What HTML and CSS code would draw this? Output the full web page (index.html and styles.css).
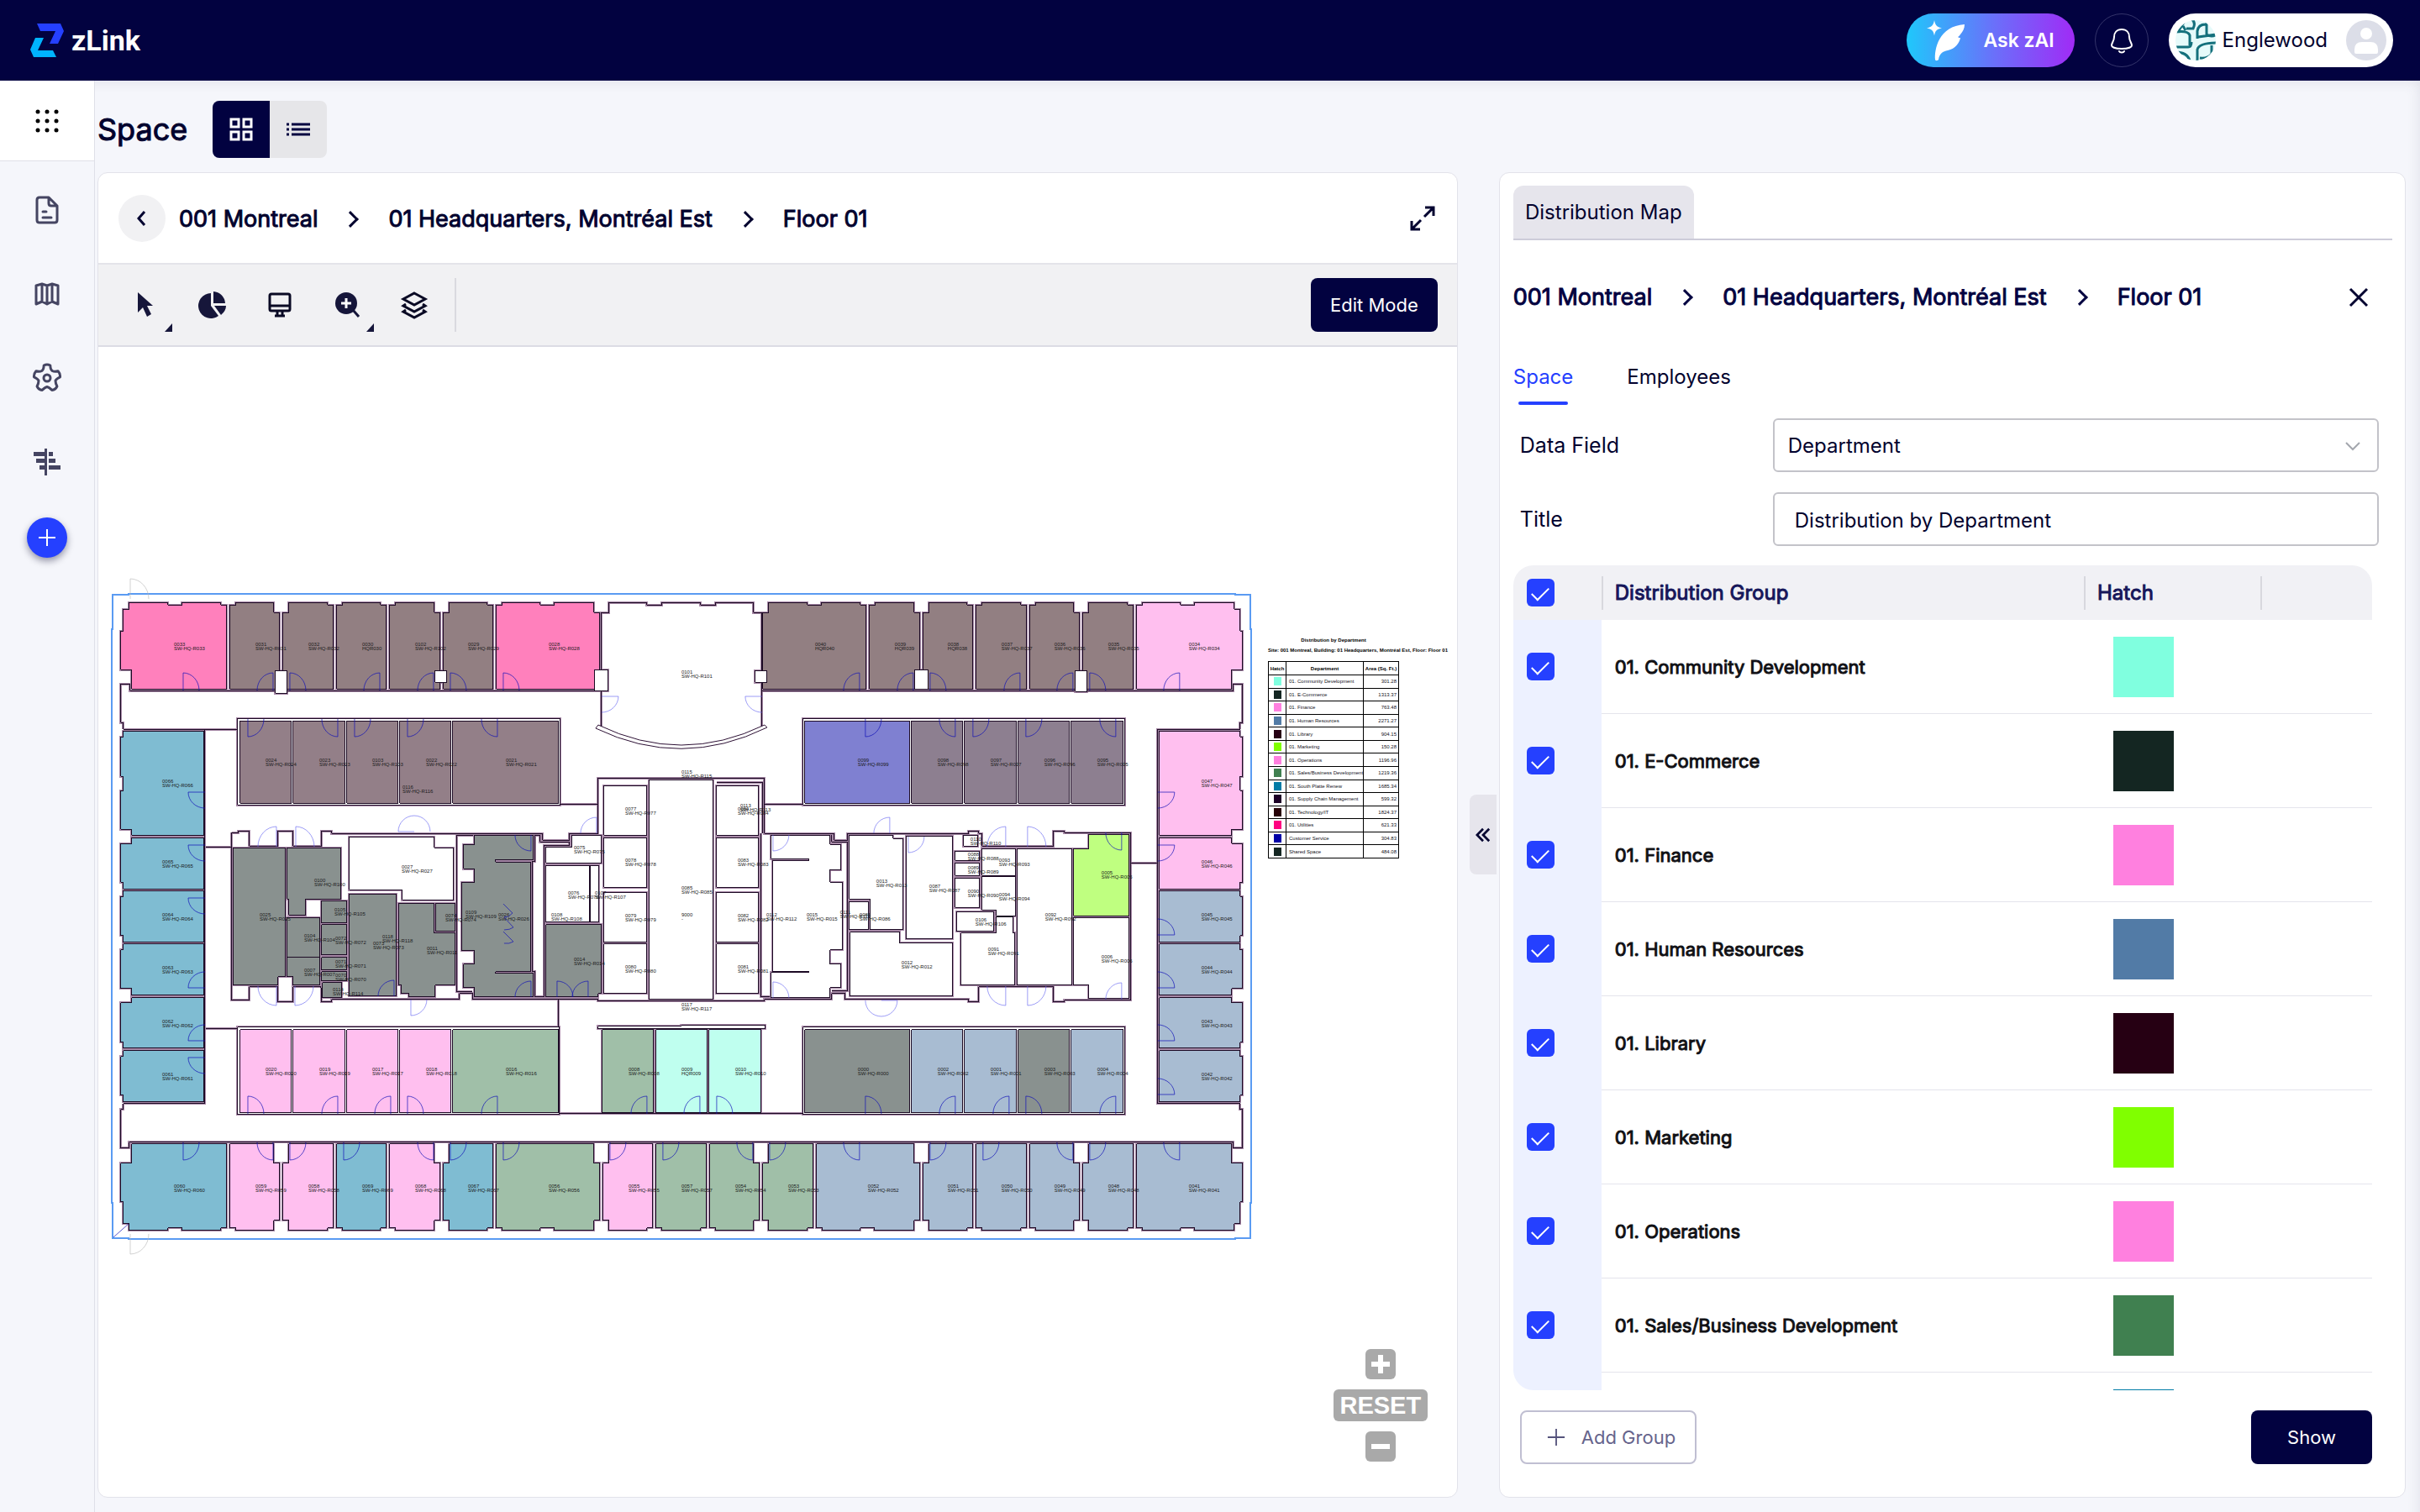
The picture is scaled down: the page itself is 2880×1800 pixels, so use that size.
FILE: index.html
```html
<!DOCTYPE html>
<html lang="en">
<head>
<meta charset="utf-8">
<title>zLink – Space</title>
<meta name="viewport" content="width=device-width, initial-scale=1">
<link rel="stylesheet" href="styles.css">
</head>
<body>
<header class="topbar">
  <a class="brand" href="#" aria-label="zLink home">
    <svg class="brand-mark" viewBox="0 0 42 42" aria-hidden="true">
      <path fill="#2540ff" d="M9 1h28l4 9-7 15H24l7-15H13z"/>
      <path fill="#00b4ff" d="M7 18h10l-7 15h18l4 8H5l-4-9z"/>
    </svg>
    <span>zLink</span>
  </a>
  <div class="topbar-tools">
    <button class="ask" type="button">
      <svg viewBox="0 0 46 50" aria-hidden="true" fill="#fff">
        <path d="M9 1c1 6 3 8 9 9.500c-6 1-8 3-9 9c-1-6-3-8-9-9c6-1.500 8-3.500 9-9.500z"/>
        <path d="M45 6c0 5-2 8-5 12c-1 1-1 2-3 3c1 1 2 1 3 1c-1 6-6 13-15 15c-6 1-10 4-11 11c-1 1-3 2-4 0c-1-12 4-40 35-42z"/>
      </svg>
      <span>Ask zAI</span>
    </button>
    <button class="bell" type="button" aria-label="Notifications">
      <svg viewBox="0 0 28 32" aria-hidden="true" fill="none" stroke="#fff" stroke-width="2" stroke-linecap="round">
        <path d="M14 3c-6 0-9 4-9 9c0 5-3 7-3 10c0 2 4 4 12 4s12-2 12-4c0-3-3-5-3-10c0-5-3-9-9-9zM11 29c1 2 5 2 6 0"/>
      </svg>
    </button>
    <button class="account" type="button">
      <svg class="org" viewBox="0 0 48 48" aria-hidden="true">
        <clipPath id="org-clip"><circle cx="24" cy="24" r="24"/></clipPath>
        <g clip-path="url(#org-clip)">
          <rect width="48" height="48" fill="#e6fafa"/>
          <g fill="none" stroke="#14707c" stroke-width="3">
            <path d="M0 14q15-2 17 4v12M0 32h15q4 0 4-6"/>
            <path d="M3 14L11 1M13 10h8q4-8-3-12M12 12l-3-5"/>
            <path d="M26 22V13q1-8 10-8M37 3v14q6 4 12 0M27 20l22-3"/>
            <path d="M26 48V35q2-8 24-8M43 30v10q-4 6-14 5M0 38q14 0 17 10"/>
          </g>
        </g>
      </svg>
      <span>Englewood</span>
      <svg class="avatar" viewBox="0 0 48 48" aria-hidden="true">
        <circle cx="24" cy="24" r="24" fill="#dcdee8"/>
        <circle cx="24" cy="16" r="7" fill="#fff"/>
        <path d="M10 38v-3q0-9 9-9h10q9 0 9 9v3q0 2-2 2H12q-2 0-2-2z" fill="#fff"/>
      </svg>
    </button>
  </div>
</header>

<div class="shell">
  <nav class="sidebar" aria-label="Main">
    <button class="apps" type="button" aria-label="Applications">
      <svg viewBox="0 0 28 28" aria-hidden="true">
        <circle cx="3" cy="3" r="2.500"/><circle cx="14" cy="3" r="2.500"/><circle cx="25" cy="3" r="2.500"/>
        <circle cx="3" cy="14" r="2.500"/><circle cx="14" cy="14" r="2.500"/><circle cx="25" cy="14" r="2.500"/>
        <circle cx="3" cy="25" r="2.500"/><circle cx="14" cy="25" r="2.500"/><circle cx="25" cy="25" r="2.500"/>
      </svg>
    </button>
    <a class="nav-link" href="#" aria-label="Documents">
      <svg viewBox="0 0 36 36" aria-hidden="true">
        <path d="M20 3H9q-3 0-3 3v24q0 3 3 3h18q3 0 3-3V13L20 3v7q0 3 3 3h7M13 20h4M13 27h10"/>
      </svg>
    </a>
    <a class="nav-link" href="#" aria-label="Maps">
      <svg viewBox="0 0 36 36" aria-hidden="true">
        <path d="M5 8l7-2 6 2 6-2 7 2v22l-7-3-6 3-6-3-7 3zM12 6v21M18 8v22M24 6v21"/>
      </svg>
    </a>
    <a class="nav-link" href="#" aria-label="Settings">
      <svg viewBox="0 0 36 36" aria-hidden="true">
        <circle cx="18" cy="18" r="4"/>
        <path d="M14.200 3Q18 1 21.800 3Q22 8 24.200 9.500Q27 11 31.100 9.800Q34 13 33.500 16.900Q29 19 28 21.200Q28 24 29.900 28Q28 32 23.800 32.400Q20 29 18 28.500Q16 29 12.200 32.400Q8 32 6.100 28Q8 24 8 21.200Q7 19 2.500 16.900Q2 13 4.900 9.800Q9 11 11.800 9.500Q14 8 14.200 3z"/>
      </svg>
    </a>
    <a class="nav-link" href="#" aria-label="Stacking">
      <svg class="solid" viewBox="0 0 36 36" aria-hidden="true">
        <path d="M15 2h3v32h-3zM2 6h13v5H2zM20 6h5v5h-5zM5 14h10v5H5zM20 14h8v5h-8zM9 22h6v5H9zM20 22h14v5H20z"/>
      </svg>
    </a>
    <button class="add" type="button" aria-label="Add">
      <svg viewBox="0 0 24 24" aria-hidden="true"><path d="M12 2v20M2 12h20"/></svg>
    </button>
  </nav>

  <main class="main">
    <div class="page-head">
      <h1>Space</h1>
      <div class="view-toggle">
        <button class="is-active" type="button" aria-label="Grid view">
          <svg viewBox="0 0 28 28" aria-hidden="true"><path d="M2 2h9v9H2zM17 2h9v9h-9zM2 17h9v9H2zM17 17h9v9h-9z"/></svg>
        </button>
        <button type="button" aria-label="List view">
          <svg viewBox="0 0 28 28" aria-hidden="true"><path d="M0 8h3M6 8h22M0 14h3M6 14h22M0 20h3M6 20h22"/></svg>
        </button>
      </div>
    </div>

    <div class="panels">
      <section class="card map-card" aria-label="Floor map">
        <div class="map-head">
          <button class="back" type="button" aria-label="Back">
            <svg viewBox="0 0 20 20" aria-hidden="true"><path d="M13 2l-7 8 7 8"/></svg>
          </button>
          <ol class="crumbs">
            <li><a href="#">001 Montreal</a></li>
            <li><a href="#">01 Headquarters, Montréal Est</a></li>
            <li>Floor 01</li>
          </ol>
          <button class="expand" type="button" aria-label="Full screen">
            <svg viewBox="0 0 32 32" aria-hidden="true"><path d="M19 3h10v10M29 3L18 14M13 29H3V19M3 29l11-11"/></svg>
          </button>
        </div>

        <div class="toolbar">
          <button class="tool has-menu" type="button" aria-label="Select">
            <svg viewBox="0 0 36 36" aria-hidden="true"><path d="M9 3v24l6-6 5 11 5-3-5-10h7z"/></svg>
          </button>
          <button class="tool" type="button" aria-label="Distribution">
            <svg viewBox="0 0 36 36" aria-hidden="true"><path d="M16 4v15l9 12A15 15 0 1 1 16 4zM19 2a15 15 0 0 1 14 14H19zM20 19h14q0 6-6 11z"/></svg>
          </button>
          <button class="tool line" type="button" aria-label="Display">
            <svg viewBox="0 0 36 36" aria-hidden="true"><path d="M8 5h20q2 0 2 2v16q0 2-2 2H8q-2 0-2-2V7q0-2 2-2zM6 19h24M15 25v5M21 25v5M12 31h12"/></svg>
          </button>
          <button class="tool has-menu" type="button" aria-label="Zoom">
            <svg viewBox="0 0 36 36" aria-hidden="true">
              <circle cx="17" cy="16" r="13"/>
              <path d="M25 24l7 8" fill="none" stroke="#16163a" stroke-width="3"/>
              <path d="M17 10v12M11 16h12" fill="none" stroke="#fff" stroke-width="3"/>
            </svg>
          </button>
          <button class="tool line" type="button" aria-label="Layers">
            <svg viewBox="0 0 36 36" aria-hidden="true"><path d="M18 4l13 7-13 7-13-7zM8 17l-3 2 13 7 13-7-3-2M8 24l-3 2 13 7 13-7-3-2"/></svg>
          </button>
          <span class="divider"></span>
          <button class="btn-dark" type="button">Edit Mode</button>
        </div>

        <div class="canvas">
          <svg id="floor-plan" viewBox="117 413 1617 1369" role="img" aria-label="Floor 01 plan"></svg>
          <div class="legend">
            <p class="legend-title">Distribution by Department</p>
            <p class="legend-site">Site: 001 Montreal, Building: 01 Headquarters, Montréal Est, Floor: Floor 01</p>
            <table>
              <thead><tr><th>Hatch</th><th>Department</th><th>Area (Sq. Ft.)</th></tr></thead>
              <tbody>
                <tr><td><i style="background:#80ffdf"></i></td><td>01. Community Development</td><td>301.28</td></tr>
                <tr><td><i style="background:#142622"></i></td><td>01. E-Commerce</td><td>1313.37</td></tr>
                <tr><td><i style="background:#ff80df"></i></td><td>01. Finance</td><td>763.48</td></tr>
                <tr><td><i style="background:#527ba6"></i></td><td>01. Human Resources</td><td>2271.27</td></tr>
                <tr><td><i style="background:#260013"></i></td><td>01. Library</td><td>904.15</td></tr>
                <tr><td><i style="background:#80ff00"></i></td><td>01. Marketing</td><td>150.28</td></tr>
                <tr><td><i style="background:#ff80df"></i></td><td>01. Operations</td><td>1196.96</td></tr>
                <tr><td><i style="background:#408050"></i></td><td>01. Sales/Business Development</td><td>1219.36</td></tr>
                <tr><td><i style="background:#007ba6"></i></td><td>01. South Platte Renew</td><td>1685.34</td></tr>
                <tr><td><i style="background:#1c0026"></i></td><td>01. Supply Chain Management</td><td>599.32</td></tr>
                <tr><td><i style="background:#260006"></i></td><td>01. Technology/IT</td><td>1824.37</td></tr>
                <tr><td><i style="background:#ff0080"></i></td><td>01. Utilities</td><td>621.33</td></tr>
                <tr><td><i style="background:#0000a6"></i></td><td>Customer Service</td><td>304.83</td></tr>
                <tr><td><i style="background:#142622"></i></td><td>Shared Space</td><td>484.08</td></tr>
              </tbody>
            </table>
          </div>
          <div class="zoom-controls">
            <button class="zoom-step" type="button" aria-label="Zoom in"><svg viewBox="0 0 36 36" aria-hidden="true"><path d="M18 7v22M7 18h22"/></svg></button>
            <button class="zoom-reset" type="button">RESET</button>
            <button class="zoom-step" type="button" aria-label="Zoom out"><svg viewBox="0 0 36 36" aria-hidden="true"><path d="M7 18h22"/></svg></button>
          </div>
        </div>
      </section>

      <section class="card side-card" aria-label="Distribution map settings">
        <button class="collapse" type="button" aria-label="Collapse panel">
          <svg viewBox="0 0 20 20" aria-hidden="true"><path d="M10 2l-8 8 8 8M18 2l-8 8 8 8"/></svg>
        </button>
        <div class="side-tabs"><button type="button">Distribution Map</button></div>
        <div class="side-head">
          <ol class="crumbs">
            <li><a href="#">001 Montreal</a></li>
            <li><a href="#">01 Headquarters, Montréal Est</a></li>
            <li>Floor 01</li>
          </ol>
          <button class="close" type="button" aria-label="Close">
            <svg viewBox="0 0 24 24" aria-hidden="true"><path d="M2 2l20 20M22 2L2 22"/></svg>
          </button>
        </div>
        <div class="sub-tabs">
          <button class="is-active" type="button">Space</button>
          <button type="button">Employees</button>
        </div>
        <div class="fields">
          <label for="data-field">Data Field</label>
          <div class="select-wrap">
            <select id="data-field"><option>Department</option></select>
            <svg viewBox="0 0 20 20" aria-hidden="true"><path d="M2 6l8 8 8-8"/></svg>
          </div>
          <label for="map-title">Title</label>
          <input id="map-title" type="text" value="Distribution by Department">
        </div>
        <div class="groups">
          <table>
            <colgroup><col class="c-check"><col><col class="c-hatch"><col class="c-more"></colgroup>
            <thead>
              <tr><th><input type="checkbox" checked aria-label="Select all groups"></th><th>Distribution Group</th><th>Hatch</th><th></th></tr>
            </thead>
            <tbody>
              <tr><td><input id="g1" type="checkbox" checked></td><td><label for="g1">01. Community Development</label></td><td><i style="background:#80ffdf"></i></td><td></td></tr>
              <tr><td><input id="g2" type="checkbox" checked></td><td><label for="g2">01. E-Commerce</label></td><td><i style="background:#142622"></i></td><td></td></tr>
              <tr><td><input id="g3" type="checkbox" checked></td><td><label for="g3">01. Finance</label></td><td><i style="background:#ff80df"></i></td><td></td></tr>
              <tr><td><input id="g4" type="checkbox" checked></td><td><label for="g4">01. Human Resources</label></td><td><i style="background:#527ba6"></i></td><td></td></tr>
              <tr><td><input id="g5" type="checkbox" checked></td><td><label for="g5">01. Library</label></td><td><i style="background:#260013"></i></td><td></td></tr>
              <tr><td><input id="g6" type="checkbox" checked></td><td><label for="g6">01. Marketing</label></td><td><i style="background:#80ff00"></i></td><td></td></tr>
              <tr><td><input id="g7" type="checkbox" checked></td><td><label for="g7">01. Operations</label></td><td><i style="background:#ff80df"></i></td><td></td></tr>
              <tr><td><input id="g8" type="checkbox" checked></td><td><label for="g8">01. Sales/Business Development</label></td><td><i style="background:#408050"></i></td><td></td></tr>
              <tr><td></td><td></td><td><i style="background:#007ba6"></i></td><td></td></tr>
            </tbody>
          </table>
        </div>
        <div class="side-foot">
          <button class="btn-line" type="button">
            <svg viewBox="0 0 24 24" aria-hidden="true"><path d="M12 1v22M1 12h22"/></svg>
            Add Group
          </button>
          <button class="btn-dark wide" type="button">Show</button>
        </div>
      </section>
    </div>
  </main>
</div>
<script src="plan.js"></script>
</body>
</html>
```
FILE: styles.css
```css
* { box-sizing: border-box; }

body {
  margin: 0;
  height: 100vh;
  display: flex;
  flex-direction: column;
  overflow: hidden;
  background: #f5f6fb;
  color: #02022e;
  font: 24px/32px Inter, "Liberation Sans", sans-serif;
}

button, input, select { font: inherit; color: inherit; }
button { border: 0; padding: 0; background: none; cursor: pointer; display: flex; align-items: center; justify-content: center; }
svg { display: block; flex: none; }
a { color: inherit; text-decoration: none; }

/* Top bar */
.topbar {
  flex: none;
  height: 96px;
  padding: 0 32px 0 35px;
  display: flex;
  align-items: center;
  justify-content: space-between;
  background: #020240;
}
.brand { display: flex; align-items: center; gap: 8px; color: #fff; font: 700 34px/40px Roboto, sans-serif; }
.brand-mark { width: 42px; height: 42px; }
.topbar-tools { display: flex; gap: 24px; }
.ask {
  width: 200px;
  height: 64px;
  border-radius: 32px;
  gap: 22px;
  background: linear-gradient(90deg, #1fc8fb, #6a70fa 52%, #a02bf6);
  color: #fff;
  font-size: 23px;
  font-weight: 600;
}
.ask svg { width: 46px; height: 50px; }
.bell { width: 64px; height: 64px; border: 1px solid #34346a; border-radius: 50%; }
.bell svg { width: 28px; height: 32px; }
.account { height: 64px; padding: 0 8px; border-radius: 32px; background: #fff; }
.account span { margin: 0 22px 0 8px; }
.org, .avatar { width: 48px; height: 48px; }

/* Side bar */
.shell { flex: 1; min-height: 0; display: flex; }
.sidebar {
  flex: none;
  width: 113px;
  display: flex;
  flex-direction: column;
  align-items: center;
  border-right: 1px solid #dfe0e8;
}
.apps { width: 112px; height: 96px; margin-bottom: 8px; background: #fff; border-bottom: 1px solid #dfe0e8; }
.apps svg { width: 28px; height: 28px; }
.nav-link { height: 100px; display: flex; align-items: center; }
.nav-link svg { width: 36px; height: 36px; fill: none; stroke: #454562; stroke-width: 3; stroke-linejoin: round; stroke-linecap: round; }
.nav-link svg.solid { fill: #454562; stroke: none; }
.add { width: 48px; height: 48px; margin-top: 16px; border-radius: 50%; background: #2540ff; box-shadow: 0 4px 8px rgba(0, 0, 40, .4); }
.add svg { width: 24px; height: 24px; stroke: #fff; stroke-width: 2; }

/* Page */
.main {
  flex: 1;
  min-width: 0;
  padding: 24px 17px 17px 3px;
  display: flex;
  flex-direction: column;
  box-shadow: inset -16px 16px 16px -16px rgba(60, 60, 90, .12);
}
.page-head { display: flex; align-items: center; gap: 30px; padding-bottom: 17px; }
h1 { margin: 0; font-size: 36px; line-height: 48px; font-weight: 400; -webkit-text-stroke: 1px; }
.view-toggle { display: flex; border-radius: 8px; overflow: hidden; background: #e6e6e9; }
.view-toggle button { width: 68px; height: 68px; }
.view-toggle svg { width: 28px; height: 28px; fill: none; stroke: #020240; stroke-width: 3; }
.view-toggle .is-active { background: #020240; }
.view-toggle .is-active svg { stroke: #fff; }

.panels { flex: 1; min-height: 0; display: grid; grid-template-columns: 3fr 2fr; grid-template-rows: 100%; gap: 49px; }
.card { min-width: 0; display: flex; flex-direction: column; background: #fff; border: 1px solid #e2e2ea; border-radius: 12px; }

.crumbs { margin: 0; padding: 2px 0 0; list-style: none; display: flex; align-items: center; font-size: 27px; line-height: 40px; -webkit-text-stroke: 1px; white-space: nowrap; }
.crumbs li { display: flex; align-items: center; }
.crumbs li + li::before {
  content: "";
  width: 11px;
  height: 11px;
  margin: 0 38px 0 32px;
  border: solid currentColor;
  border-width: 3px 3px 0 0;
  transform: rotate(45deg);
}

.map-head { flex: none; height: 109px; padding: 0 25px 0 24px; display: flex; align-items: center; border-bottom: 2px solid #e4e4ea; }
.back { width: 56px; height: 56px; margin-right: 16px; border-radius: 50%; background: #f1f1f3; }
.back svg { width: 20px; height: 20px; fill: none; stroke: #020230; stroke-width: 3; }
.expand { margin-left: auto; }
.expand svg { width: 32px; height: 32px; fill: none; stroke: #020230; stroke-width: 3; }

.toolbar { flex: none; height: 98px; padding: 0 23px 0 16px; display: flex; align-items: center; background: #f1f1f3; border-bottom: 2px solid #dcdce4; }
.tool { position: relative; width: 80px; height: 80px; }
.tool svg { width: 36px; height: 36px; fill: #16163a; }
.tool.line svg { fill: none; stroke: #0a0a24; stroke-width: 3; }
.tool.has-menu::after { content: ""; position: absolute; right: 8px; bottom: 8px; border: solid transparent; border-width: 10px 0 0 9px; border-bottom: 10px solid #16163a; border-top: 0; }
.divider { width: 2px; height: 64px; margin-left: 8px; background: #dadadf; }
.btn-dark { height: 64px; padding: 0 23px; border-radius: 8px; background: #020240; color: #fff; font-size: 22px; }
.toolbar .btn-dark { margin-left: auto; }
.wide { width: 144px; }

/* Drawing canvas */
.canvas { position: relative; flex: 1; min-height: 0; }
#floor-plan { width: 100%; height: 100%; }
.legend { position: absolute; left: 1392px; top: 343px; width: 210px; font: 6px/12px "Liberation Sans", sans-serif; color: #112; }
.legend p { margin: 0; font-weight: 700; color: #000; white-space: nowrap; }
.legend-title { width: 156px; text-align: center; }
.legend table { width: 156px; height: 235px; margin-top: 7px; border-collapse: collapse; table-layout: fixed; line-height: 8px; }
.legend th, .legend td { padding: 0 2px 0 3px; border: 1px solid #000; white-space: nowrap; text-align: left; }
.legend th { height: 16px; padding: 0; text-align: center; color: #000; }
.legend th:first-child { width: 21px; }
.legend th:last-child { width: 42px; }
.legend td:last-child { text-align: right; }
.legend i { display: block; width: 9px; height: 10px; margin: 0 auto; }
.zoom-controls { position: absolute; right: 35px; bottom: 42px; display: flex; flex-direction: column; align-items: center; gap: 12px; }
.zoom-step { width: 36px; height: 36px; border-radius: 6px; background: #a9a9a9; }
.zoom-step svg { width: 36px; height: 36px; stroke: #fff; stroke-width: 6; }
.zoom-reset { width: 112px; height: 38px; border-radius: 6px; background: #a9a9a9; color: #fff; font: 700 29px/38px "Liberation Sans", sans-serif; }

.plan-wall, .plan-room { stroke-linejoin: miter; shape-rendering: crispEdges; }
.plan-halo { fill: none; stroke: #a88aa8; stroke-width: 3; shape-rendering: crispEdges; }
.plan-wall { fill: none; stroke: #1c0a24; stroke-width: 1; }
.plan-room { stroke: #1c0a24; stroke-width: 1; }
.plan-curve { fill: #fff; stroke: #2c1034; stroke-width: 1; }
.plan-edge { fill: none; stroke: #5a9bf2; stroke-width: 2; shape-rendering: crispEdges; }
.plan-door { fill: none; stroke: #1010b8; stroke-width: 1; opacity: .7; }
.plan-door.light { stroke: #5a5af0; opacity: .6; }
.plan-door.ghost { stroke: #b4b4b4; opacity: .6; }
.plan-label { font: 6px "Liberation Sans", sans-serif; fill: #1a1a1a; }

/* Distribution panel */
.side-card { position: relative; padding: 15px 15px 39px 16px; }
.collapse { position: absolute; left: -36px; top: 740px; width: 32px; height: 95px; border-radius: 8px 0 0 8px; background: #e6e5ec; }
.collapse svg { width: 18px; height: 20px; fill: none; stroke: #020230; stroke-width: 3; }
.side-tabs { flex: none; display: flex; height: 65px; border-bottom: 2px solid #cdccd9; }
.side-tabs button { width: 215px; border-radius: 12px 12px 0 0; background: #e6e5ec; }
.side-head { flex: none; display: flex; align-items: center; justify-content: space-between; height: 136px; padding-right: 28px; }
.close svg { width: 24px; height: 24px; stroke: #020230; stroke-width: 3; }
.side-head .crumbs { padding-top: 0; color: #020240; }
.sub-tabs { flex: none; display: flex; gap: 64px; height: 76px; padding-top: 6px; align-items: flex-start; }
.sub-tabs button { position: relative; height: 50px; padding-bottom: 8px; }
.sub-tabs .is-active { color: #2540ff; }
.sub-tabs .is-active::after { content: ""; position: absolute; left: 6px; right: 6px; bottom: -4px; height: 4px; border-radius: 2px; background: #2540ff; }

.fields { flex: none; display: grid; grid-template-columns: 301px 1fr; row-gap: 24px; align-items: center; padding: 0 16px 0 8px; font-size: 24px; }
.fields label { font-size: 25px; }
.fields input, .fields select { width: 100%; height: 64px; padding: 2px 16px 0; border: 2px solid #c3c3c9; border-radius: 6px; background: #fff; color: #02022e; appearance: none; outline: 0; }
.fields input { padding-left: 24px; }
.select-wrap { position: relative; }
.select-wrap svg { position: absolute; right: 21px; top: 23px; width: 20px; height: 20px; fill: none; stroke: #a4a7ae; stroke-width: 2; }

.groups { flex: 1; min-height: 0; margin: 23px 24px 0 0; overflow: hidden; border-radius: 24px 24px 0 24px; }
.groups table { width: 100%; table-layout: fixed; border-collapse: separate; border-spacing: 0; }
.c-check { width: 105px; }
.c-hatch { width: 210px; }
.c-more { width: 133px; }
.groups th, .groups td { padding: 0 16px; text-align: left; -webkit-text-stroke: 1px; }
.groups th { position: relative; height: 65px; background: #f1f1f5; color: #16165a; font-weight: 400; }
.groups th + th::before { content: ""; position: absolute; left: 0; top: 13px; width: 2px; height: 40px; background: #d8d8de; }
.groups td { height: 112px; border-bottom: 1px solid #e4e4ec; color: #101014; font-size: 22px; }
.groups td:first-child { background: #edf1ff; border-bottom-color: #edf1ff; }
.groups td:nth-child(3) { padding-left: 35px; }
.groups i { display: block; width: 72px; height: 72px; }
.groups input {
  display: block;
  appearance: none;
  width: 33px;
  height: 33px;
  margin: 0;
  border-radius: 6px;
  background: #2540ff;
}
.groups input:checked::before {
  content: "";
  display: block;
  width: 18px;
  height: 9px;
  margin: 0 auto;
  border: solid #fff;
  border-width: 0 0 2px 2px;
  transform: translateY(10px) rotate(-45deg);
}

.side-foot { flex: none; display: flex; justify-content: space-between; margin-top: 24px; padding: 0 24px 0 8px; }
.btn-line { height: 64px; padding: 0 23px 0 30px; gap: 19px; border: 2px solid #c0bfd2; border-radius: 8px; color: #66648c; font-size: 22px; }
.btn-line svg { width: 22px; height: 22px; stroke: #55537c; stroke-width: 2; }
```
FILE: plan.js
```js
// Draws the floor plan: rooms, walls, doors and room labels.
(function () {
  var C = {
    pink: '#ff80bc', brown: '#927f82', plum: '#937f88', slate: '#8d7f90',
    rose: '#ffbfef', teal: '#7fbcd2', grey: '#89918f', blue: '#7f80d1',
    sage: '#a0bfa8', steel: '#a8bcd2', mint: '#bfffef', lime: '#bfff80', none: '#fff'
  };
  var halo = '', body = '', doors = '', text = '';

  function path(list) { return 'M' + list.join('L'); }
  function room(color, pts) {
    var d = path(pts) + 'Z';
    halo += '<path class="plan-halo" d="' + d + '"/>';
    body += '<path class="plan-room" fill="' + C[color] + '" d="' + d + '"/>';
  }
  function rect(color, x1, y1, x2, y2) {
    room(color, [[x1, y1], [x2, y1], [x2, y2], [x1, y2]]);
  }
  function wall(pts) {
    halo += '<path class="plan-halo" d="' + path(pts) + '"/>';
    body += '<path class="plan-wall" d="' + path(pts) + '"/>';
  }
  function swing(hx, hy, dx, dy, kind) {
    var sweep = dx * dy < 0 ? 1 : 0;
    doors += '<path class="plan-door ' + (kind || '') + '" d="M' + hx + ' ' + hy + 'v' + dy +
      'A' + Math.abs(dx) + ' ' + Math.abs(dy) + ' 0 0 ' + sweep + ' ' + (hx + dx) + ' ' + hy + '"/>';
  }
  function sideSwing(hx, hy, dx, dy, kind) {
    var sweep = dx * dy < 0 ? 0 : 1;
    doors += '<path class="plan-door ' + (kind || '') + '" d="M' + hx + ' ' + hy + 'h' + dx +
      'A' + Math.abs(dx) + ' ' + Math.abs(dy) + ' 0 0 ' + sweep + ' ' + hx + ' ' + (hy + dy) + '"/>';
  }
  function label(n, x, y, second) {
    text += '<text class="plan-label" x="' + x + '" y="' + y + '">' + n +
      '<tspan x="' + x + '" dy="5">' + (second || 'SW-HQ-R' + n.slice(1)) + '</tspan></text>';
  }

  // Facade rooms: outline with window reveals; mirrored for the lower row.
  var bigNotch = [335, 526, 716, 906, 1097, 1287];
  var smallNotch = [209, 272, 399, 462, 589, 652, 779, 843, 970, 1033, 1160, 1224, 1351, 1414];
  function facade(color, x1, x2, lower) {
    var Y = function (y) { return lower ? 2182 - y : y; };
    var p = [];
    var l = x1 + 2, r = x2 - 2;
    if (x1 === 144) {
      p.push([157, Y(820)], [157, Y(797)], [144, Y(797)], [144, Y(751)], [147, Y(751)], [147, Y(725)], [154, Y(725)], [154, Y(717)]);
    } else {
      var bl = bigNotch.indexOf(x1) >= 0;
      if (bl) {
        if (lower) p.push([x1 + 9, Y(820)], [x1 + 9, Y(797)], [l, Y(797)]); else p.push([l, Y(820)]);
        p.push([l, Y(729)], [x1 + 9, Y(729)], [x1 + 9, Y(717)]);
      } else p.push([l, Y(820)], [l, Y(720)], [x1 + 9, Y(720)], [x1 + 9, Y(717)]);
    }
    smallNotch.forEach(function (n) {
      if (n > x1 + 12 && n < x2 - 12) p.push([n - 9, Y(717)], [n - 9, Y(720)], [n + 8, Y(720)], [n + 8, Y(717)]);
    });
    if (x2 === 1479) {
      p.push([1469, Y(717)], [1469, Y(725)], [1476, Y(725)], [1476, Y(751)], [1479, Y(751)], [1479, Y(797)], [1466, Y(797)], [1466, Y(820)]);
    } else if (bigNotch.indexOf(x2) >= 0) {
      p.push([x2 - 9, Y(717)], [x2 - 9, Y(729)], [r, Y(729)]);
      if (lower) p.push([r, Y(797)], [x2 - 9, Y(797)], [x2 - 9, Y(820)]); else p.push([r, Y(820)]);
    } else p.push([x2 - 9, Y(717)], [x2 - 9, Y(720)], [r, Y(720)], [r, Y(820)]);
    room(color, p);
  }
  [['pink', 144, 272], ['brown', 272, 335], ['brown', 335, 399], ['brown', 399, 462], ['brown', 462, 526],
   ['brown', 526, 589], ['pink', 589, 716], ['brown', 906, 1033], ['brown', 1033, 1097], ['brown', 1097, 1160],
   ['brown', 1160, 1224], ['brown', 1224, 1287], ['brown', 1287, 1351], ['rose', 1351, 1479]
  ].forEach(function (r) { facade(r[0], r[1], r[2], false); });
  [['teal', 144, 272], ['rose', 272, 335], ['rose', 335, 399], ['teal', 399, 462], ['rose', 462, 526],
   ['teal', 526, 589], ['sage', 589, 716], ['rose', 716, 779], ['sage', 779, 843], ['sage', 843, 906],
   ['sage', 906, 970], ['steel', 970, 1097], ['steel', 1097, 1160], ['steel', 1160, 1224],
   ['steel', 1224, 1287], ['steel', 1287, 1351], ['steel', 1351, 1479]
  ].forEach(function (r) { facade(r[0], r[1], r[2], true); });

  // Corridor walls
  wall([[147, 868], [147, 860], [144, 860], [144, 814], [155, 814], [155, 822], [716, 822]]);
  wall([[907, 822], [1468, 822], [1468, 814], [1479, 814], [1479, 860], [1476, 860], [1476, 868]]);
  wall([[147, 1314], [147, 1321], [144, 1321], [144, 1367], [154, 1367], [154, 1360], [1468, 1360], [1468, 1367], [1479, 1367], [1479, 1321], [1476, 1321], [1476, 1314]]);
  wall([[147, 868], [283, 868]]);
  wall([[244, 868], [244, 1314], [147, 1314]]);
  wall([[1476, 868], [1378, 868], [1378, 1314], [1476, 1314]]);
  wall([[245, 1008], [276, 1008]]);
  wall([[245, 1225], [283, 1225]]);
  wall([[667, 957], [712, 957]]);
  wall([[910, 957], [956, 957]]);
  wall([[1346, 1027], [1378, 1027]]);
  wall([[665, 1190], [665, 1224]]);
  wall([[283, 1326], [1339, 1326]]);

  // Side rooms
  var sides = [
    [870, 994, [[147, 870], [147, 877], [144, 877], [144, 924], [147, 924], [147, 941], [144, 941], [144, 987], [157, 987], [157, 994]], 'teal', 'rose'],
    [997, 1058, [[157, 997], [157, 1004], [144, 1004], [144, 1050], [147, 1050], [147, 1058]], 'teal', 'rose'],
    [1060, 1122, [[147, 1060], [147, 1067], [144, 1067], [144, 1114], [147, 1114], [147, 1122]], 'teal', 'steel'],
    [1124, 1185, [[147, 1124], [147, 1131], [144, 1131], [144, 1177], [157, 1177], [157, 1185]], 'teal', 'steel'],
    [1188, 1248, [[157, 1188], [157, 1194], [144, 1194], [144, 1241], [147, 1241], [147, 1248]], 'teal', 'steel'],
    [1251, 1312, [[147, 1251], [147, 1258], [144, 1258], [144, 1304], [147, 1304], [147, 1312]], 'teal', 'steel']
  ];
  sides.forEach(function (s) {
    room(s[3], s[2].concat([[243, s[1]], [243, s[0]]]));
    room(s[4], s[2].map(function (p) { return [1623 - p[0], p[1]]; }).concat([[1380, s[1]], [1380, s[0]]]));
  });

  // Inner office blocks
  rect('none', 283, 855, 667, 958);
  rect('none', 956, 855, 1339, 958);
  rect('none', 283, 1223, 666, 1327);
  rect('none', 956, 1223, 1339, 1327);
  [['plum', 286, 347], ['plum', 349, 411], ['plum', 413, 474], ['plum', 476, 537], ['plum', 539, 665],
   ['blue', 958, 1083], ['slate', 1085, 1146], ['slate', 1148, 1210], ['slate', 1212, 1273], ['slate', 1275, 1337]
  ].forEach(function (r) { rect(r[0], r[1], 858, r[2], 956); });
  [['rose', 286, 347], ['rose', 349, 411], ['rose', 413, 474], ['rose', 476, 537], ['sage', 539, 665],
   ['sage', 717, 778], ['mint', 781, 842], ['mint', 844, 906],
   ['grey', 958, 1083], ['steel', 1085, 1146], ['steel', 1148, 1210], ['grey', 1212, 1273], ['steel', 1275, 1337]
  ].forEach(function (r) { rect(r[0], r[1], 1226, r[2], 1325); });
  room('none', [[712, 1222], [811, 1222], [811, 1221], [911, 1221], [911, 1225], [712, 1225]]);

  // Conference hall
  wall([[716, 865], [716, 729], [725, 729], [725, 717], [770, 717], [770, 720], [788, 720], [788, 717], [834, 717], [834, 720], [852, 720], [852, 717], [897, 717], [897, 729], [907, 729], [907, 865]]);
  body += '<path class="plan-curve" d="M712 863Q811 911 910 863L913 866Q811 916 709 867Z"/>';

  // Structural columns
  [[328, 798, 342, 825], [518, 798, 532, 812], [708, 797, 724, 822], [899, 798, 913, 812], [1089, 797, 1105, 820], [1280, 798, 1294, 823]]
    .forEach(function (r) { rect('none', r[0], r[1], r[2], r[3]); });

  // Service core outline
  wall([[276, 991], [284, 991], [284, 989], [297, 989], [297, 1007], [331, 1007], [331, 989], [349, 989], [349, 1007], [383, 1007], [383, 989], [395, 989], [395, 992], [646, 992], [646, 1000], [678, 1000], [678, 992], [712, 992], [712, 926], [910, 926], [910, 992], [993, 992], [993, 1000], [1009, 1000], [1009, 992], [1153, 992], [1153, 989], [1165, 989], [1165, 992], [1169, 992], [1169, 1007], [1254, 1007], [1254, 989], [1267, 989], [1267, 991], [1346, 991], [1346, 1191], [1267, 1191], [1267, 1193], [1254, 1193], [1254, 1175], [1165, 1175], [1165, 1193], [1153, 1193], [1153, 1190], [1006, 1190], [1006, 1183], [990, 1183], [990, 1190], [910, 1190], [910, 1192], [712, 1192], [712, 1190], [563, 1190], [563, 1183], [547, 1183], [547, 1190], [395, 1190], [395, 1193], [383, 1193], [382, 1175], [349, 1175], [349, 1193], [331, 1193], [331, 1175], [297, 1175], [297, 1191], [276, 1191], [276, 991]]);

  // Core, west
  room('grey', [[278, 1009], [340, 1009], [340, 1163], [331, 1163], [331, 1173], [278, 1173]]);
  room('grey', [[342, 1009], [406, 1009], [406, 1070], [364, 1070], [364, 1089], [344, 1089], [344, 1070], [342, 1070]]);
  rect('grey', 383, 1072, 413, 1099);
  rect('grey', 342, 1092, 381, 1140);
  room('grey', [[342, 1140], [381, 1140], [381, 1173], [349, 1173], [349, 1163], [342, 1163]]);
  rect('grey', 383, 1101, 413, 1137);
  rect('grey', 383, 1140, 413, 1155);
  rect('grey', 383, 1157, 413, 1168);
  rect('grey', 384, 1170, 407, 1188);
  rect('grey', 416, 1064, 472, 1186);
  room('grey', [[475, 1075], [517, 1075], [517, 1111], [542, 1111], [542, 1173], [518, 1173], [518, 1187], [487, 1187], [487, 1183], [478, 1183], [478, 1173], [475, 1173]]);
  rect('grey', 519, 1075, 542, 1109);
  room('none', [[416, 996], [517, 996], [517, 1009], [540, 1009], [540, 1071], [479, 1071], [479, 1059], [416, 1059]]);
  wall([[563, 994], [544, 994], [544, 1181], [562, 1181]]);
  room('grey', [[565, 994], [635, 994], [635, 1023], [590, 1023], [590, 1026], [632, 1026], [632, 1157], [590, 1157], [590, 1159], [635, 1159], [635, 1187], [565, 1187], [565, 1176], [552, 1176], [552, 1148], [565, 1148], [565, 1132], [550, 1132], [550, 1050], [565, 1050], [565, 1034], [552, 1034], [552, 1005], [565, 1005]]);
  wall([[637, 994], [637, 1025], [634, 1025], [634, 1157], [637, 1157], [637, 1187], [648, 1187], [648, 1006], [678, 1006], [678, 1002], [643, 1002], [643, 994], [637, 994]]);
  room('none', [[681, 994], [716, 994], [716, 1027], [650, 1027], [650, 1008], [681, 1008]]);
  rect('none', 650, 1030, 702, 1098);
  rect('none', 703, 1030, 713, 1098);
  room('grey', [[650, 1101], [716, 1101], [716, 1183], [712, 1183], [712, 1187], [650, 1187]]);

  // Lift shafts
  [[935, 994], [997, 1056], [1062, 1122], [1124, 1183]].forEach(function (s) {
    rect('none', 719, s[0], 770, s[1]);
    rect('none', 853, s[0], 903, s[1]);
  });
  rect('none', 773, 928, 849, 1190);
  wall([[853, 931], [908, 931], [908, 992]]);
  wall([[906, 992], [906, 1187], [916, 1187]]);

  // Core, east
  room('none', [[918, 994], [988, 994], [988, 1005], [1001, 1005], [1001, 1035], [988, 1035], [988, 1050], [1003, 1050], [1003, 1131], [988, 1131], [988, 1148], [1001, 1148], [1001, 1176], [988, 1176], [988, 1188], [918, 1188], [918, 1158], [963, 1158], [963, 1157], [920, 1157], [920, 1024], [963, 1024], [963, 1022], [918, 1022]]);
  wall([[990, 994], [990, 1002], [1009, 1002], [1009, 1180], [990, 1180]]);
  room('none', [[1011, 994], [1063, 994], [1063, 998], [1075, 998], [1075, 1107], [1036, 1107], [1036, 1070], [1011, 1070]]);
  rect('none', 1011, 1073, 1034, 1107);
  room('none', [[1012, 1110], [1071, 1110], [1071, 1123], [1134, 1123], [1134, 1186], [1012, 1186]]);
  rect('none', 1079, 995, 1134, 1118);
  rect('none', 1147, 994, 1164, 1007);
  rect('none', 1137, 1013, 1166, 1024);
  rect('none', 1137, 1027, 1166, 1042);
  rect('none', 1137, 1045, 1166, 1080);
  rect('none', 1139, 1085, 1183, 1109);
  rect('none', 1169, 1010, 1209, 1042);
  room('none', [[1169, 1043], [1209, 1043], [1209, 1090], [1186, 1090], [1186, 1083], [1169, 1083]]);
  room('none', [[1186, 1091], [1206, 1091], [1206, 1111], [1208, 1111], [1208, 1173], [1144, 1173], [1144, 1111], [1186, 1111]]);
  rect('none', 1211, 1010, 1276, 1173);
  room('lime', [[1296, 993], [1344, 993], [1344, 1090], [1278, 1090], [1278, 1010], [1296, 1010]]);
  room('none', [[1278, 1092], [1344, 1092], [1344, 1189], [1296, 1189], [1296, 1173], [1278, 1173]]);

  // Drawing boundary
  body += '<path class="plan-edge" d="M153 707H1470V708H1488V749H1489V1432H1488V1474H1470V1475H153V1474H134V1432H133V749H134V708H153Z"/>';
  doors += '<path class="plan-door" d="M135 1473L153 1457"/>';

  // Doors
  [[218, 1], [325, -1], [345, 1], [452, -1], [516, -1], [536, 1], [599, 1], [1023, -1], [1087, -1], [1107, 1], [1214, -1], [1277, -1], [1297, 1], [1404, -1]]
    .forEach(function (d) { swing(d[0], 822, 19 * d[1], -21); });
  [[295, 1], [402, -1], [422, 1], [485, 1], [592, -1], [1030, 1], [1137, -1], [1158, 1], [1221, 1], [1328, -1]]
    .forEach(function (d) { swing(d[0], 856, 19 * d[1], 21); });
  [[295, 1], [402, -1], [465, -1], [485, 1], [592, -1], [770, -1], [833, -1], [853, 1], [1030, 1], [1137, -1], [1201, -1], [1221, 1], [1328, -1]]
    .forEach(function (d) { swing(d[0], 1326, 19 * d[1], -21); });
  [[218, 1], [325, -1], [345, 1], [409, 1], [516, -1], [536, 1], [599, 1], [726, 1], [789, 1], [896, -1], [916, 1], [1023, -1], [1107, 1], [1170, 1], [1277, -1], [1297, 1], [1404, -1]]
    .forEach(function (d) { swing(d[0], 1360, 19 * d[1], 21); });
  [[943, 1], [1006, 1], [1069, 1], [1176, -1], [1239, -1], [1259, 1]].forEach(function (d) { sideSwing(244, d[0], -20, 19 * d[1]); });
  [[943, 1], [1006, 1], [1113, -1], [1176, -1], [1239, -1], [1303, -1]].forEach(function (d) { sideSwing(1378, d[0], 20, 19 * d[1]); });
  [[329, 1008, -22, -24], [352, 1008, 22, -24], [329, 1174, -22, 23], [351, 1174, 22, 23],
   [1197, 1008, -22, -24], [1223, 1008, 22, -24], [1197, 1174, -22, 23], [1223, 1174, 22, 23],
   [489, 1190, 19, 19], [710, 992, -19, -19], [1059, 992, -19, -19], [1081, 996, 19, 19],
   [1335, 1190, -19, -20], [920, 1188, 19, -19], [920, 994, 19, 19]
  ].forEach(function (d) { swing(d[0], d[1], d[2], d[3], 'light'); });
  [[632, 994, -19, 19], [632, 1187, -19, -19], [663, 1187, 19, -19], [700, 1187, -19, -19], [469, 1186, -19, -19], [1335, 991, -19, 21]]
    .forEach(function (d) { swing(d[0], d[1], d[2], d[3]); });
  sideSwing(716, 829, 20, 19, 'light');
  sideSwing(907, 829, -20, 19, 'light');
  swing(155, 713, 22, -24, 'ghost');
  swing(155, 1469, 22, 24, 'ghost');
  doors += '<path class="plan-door light" d="M493 990h-19a19 19 0 0 1 38 0M1049 1191h19a19 19 0 0 1-38 0"/>';
  doors += '<path class="plan-door" d="M599 1076l11 11q-4 5-10 5l11 12q-4 3-11 3m-1 2l12 12q-5 3-11 2"/>';

  // Labels
  function row(y, items) { items.forEach(function (i) { label(i[0], i[1], y, i[2]); }); }
  row(769, [['0033', 207], ['0031', 304], ['0032', 367], ['0030', 431, 'HQR030'], ['0102', 494], ['0029', 557], ['0028', 653],
    ['0040', 970, 'HQR040'], ['0039', 1065, 'HQR039'], ['0038', 1128, 'HQR038'], ['0037', 1192], ['0036', 1255], ['0035', 1319], ['0034', 1415]]);
  row(907, [['0024', 316], ['0023', 380], ['0103', 443], ['0022', 507], ['0021', 602], ['0099', 1021], ['0098', 1116], ['0097', 1179], ['0096', 1243], ['0095', 1306]]);
  row(1275, [['0020', 316], ['0019', 380], ['0017', 443], ['0018', 507], ['0016', 602], ['0008', 748], ['0009', 811, 'HQR009'], ['0010', 875],
    ['0000', 1021], ['0002', 1116], ['0001', 1179], ['0003', 1243], ['0004', 1306]]);
  row(1414, [['0060', 207], ['0059', 304], ['0058', 367], ['0069', 431], ['0068', 494], ['0067', 557], ['0056', 653], ['0055', 748], ['0057', 811],
    ['0054', 875], ['0053', 938], ['0052', 1033], ['0051', 1128], ['0050', 1192], ['0049', 1255], ['0048', 1319], ['0041', 1415]]);
  [['0066', '0047', 932], ['0065', '0046', 1028], ['0064', '0045', 1091], ['0063', '0044', 1154], ['0062', '0043', 1218], ['0061', '0042', 1281]]
    .forEach(function (s) { label(s[0], 193, s[2]); label(s[1], 1430, s[2]); });
  [['0101', 811, 802], ['0115', 811, 921], ['0116', 479, 939], ['0100', 374, 1050], ['0027', 478, 1034], ['0105', 398, 1085],
   ['0025', 309, 1091], ['0104', 362, 1116], ['0072', 399, 1119], ['0071', 399, 1147], ['0070', 399, 1163], ['0114', 396, 1180],
   ['0007', 362, 1157], ['0073', 444, 1125], ['0118', 455, 1117], ['0011', 508, 1131], ['0074', 530, 1092], ['0109', 554, 1088],
   ['0026', 593, 1091], ['0075', 683, 1011], ['0076', 676, 1065], ['0107', 708, 1065], ['0108', 656, 1091], ['0077', 744, 965],
   ['0078', 744, 1026], ['0079', 744, 1092], ['0080', 744, 1153], ['0084', 878, 965], ['0113', 881, 961], ['0083', 878, 1026],
   ['0082', 878, 1092], ['0081', 878, 1153], ['0085', 811, 1059], ['9000', 811, 1091, '-'], ['0112', 912, 1091], ['0015', 960, 1091],
   ['0111', 1000, 1088], ['0086', 1023, 1091], ['0014', 683, 1144], ['0013', 1043, 1051], ['0087', 1106, 1057], ['0110', 1155, 1001],
   ['0088', 1152, 1019], ['0089', 1152, 1035], ['0090', 1152, 1063], ['0093', 1189, 1026], ['0094', 1189, 1067], ['0106', 1161, 1097],
   ['0091', 1176, 1132], ['0092', 1244, 1091], ['0005', 1311, 1041], ['0006', 1311, 1141], ['0012', 1073, 1148], ['0117', 811, 1198]
  ].forEach(function (l) { label(l[0], l[1], l[2], l[3]); });

  document.getElementById('floor-plan').innerHTML = halo + body + doors + text;
})();
```
